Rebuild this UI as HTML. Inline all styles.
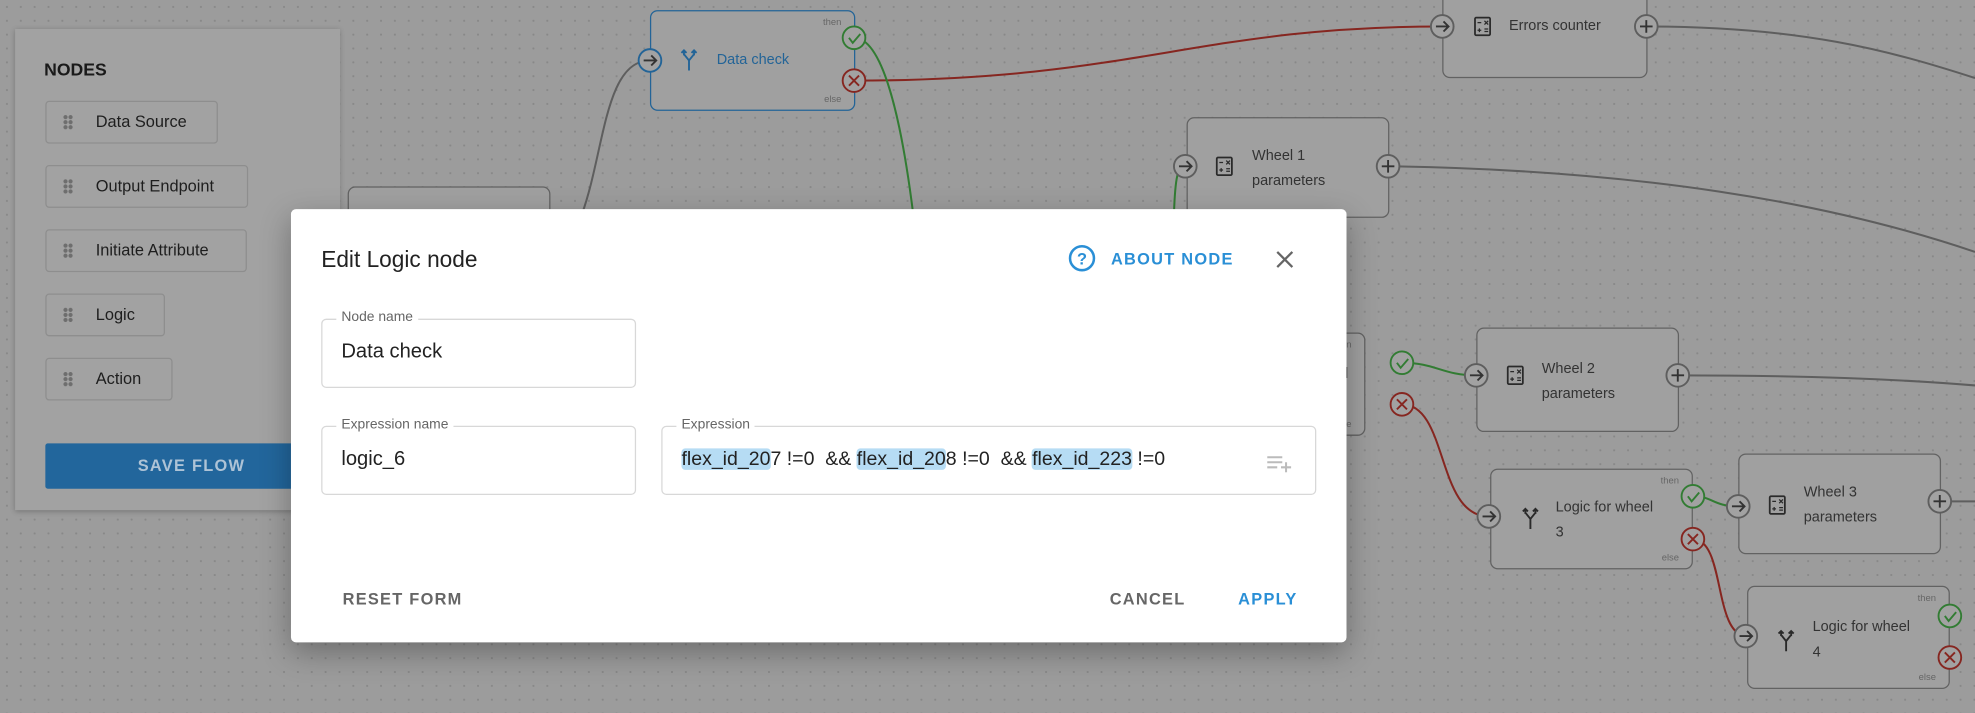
<!DOCTYPE html>
<html><head><meta charset="utf-8"><style>
*{box-sizing:border-box;margin:0;padding:0}
html,body{width:1975px;height:712px;overflow:hidden;background:#9c9c9c}
#w{position:absolute;left:0;top:0;width:1568px;height:566px;transform:scale(1.2596);transform-origin:0 0;font-family:"Liberation Sans",sans-serif;
background-color:#9c9c9c;background-image:radial-gradient(circle,#888 0.7px,transparent 1px);background-size:11px 11px}
.abs{position:absolute}
.side{left:12px;top:23px;width:258px;height:382px;background:#a2a2a2;box-shadow:0 1px 4px rgba(0,0,0,.25)}
.side h3{position:absolute;left:23px;top:24px;font-size:14px;font-weight:bold;color:#1a1a1a}
.item{position:absolute;left:24px;height:34px;border:1px solid #8e8e8e;border-radius:3px;font-size:13px;color:#1e1e1e;padding-left:39px;line-height:32px}
.item:before{content:"";position:absolute;left:13px;top:10px;width:8px;height:12px;background:radial-gradient(circle,#6e6e6e 1.5px,transparent 1.8px);background-size:4px 4px}
.btn{position:absolute;left:24px;top:329px;width:232px;height:36px;background:#22669c;color:#aec3d6;font-size:13px;font-weight:bold;letter-spacing:1px;text-align:center;line-height:36px;border-radius:2px}
.node{position:absolute;background:#a0a0a0;border:1.5px solid #626262;border-radius:6px;font-size:12px;color:#444}
.lbl{position:absolute;font-size:11.5px;line-height:24px;color:#333}
.tiny{position:absolute;font-size:7.5px;color:#666}
.dlg{left:231px;top:166px;width:838px;height:344px;background:#fff;border-radius:4px;box-shadow:0 8px 24px rgba(0,0,0,.3)}
.fld{position:absolute;border:1px solid #d8d8d8;border-radius:4px;height:55px;font-size:16px;color:#222;padding:17px 15px}
.fld span.l{position:absolute;left:11px;top:-8px;background:#fff;padding:0 4px;font-size:11px;color:#666}
.hl{background:#b6dcf4;border-radius:3px}
.tb{position:absolute;font-size:13px;font-weight:bold;letter-spacing:1px}
</style></head><body><div id="w">
<svg class="abs" style="left:0;top:0" width="1568" height="566" fill="none" stroke-width="1.6">
<path d="M678 64 C900 64 950 21 1145 21" stroke="#862620"/>
<path d="M678 30 C700 30 715 90 725 170" stroke="#327c33"/>
<path d="M516 48 C480 48 480 120 462 170" stroke="#5e5e5e"/>
<path d="M1307 21 C1430 21 1500 40 1568 62" stroke="#5e5e5e"/>
<path d="M1102 132 C1300 135 1450 160 1568 200" stroke="#5e5e5e"/>
<path d="M1332 298 C1450 298 1520 302 1568 306" stroke="#5e5e5e"/>
<path d="M932 170 C933 140 935 132 941 132" stroke="#327c33"/>
<path d="M1113 288 C1140 288 1145 298 1172 298" stroke="#327c33"/>
<path d="M1113 321 C1150 321 1140 410 1182 410" stroke="#862620"/>
<path d="M1344 394 C1360 394 1360 402 1380 402" stroke="#327c33"/>
<path d="M1344 428 C1370 428 1360 505 1387 505" stroke="#862620"/>
<path d="M1540 398 L1568 398" stroke="#5e5e5e"/>
</svg>
<div class="side abs"><h3>NODES</h3>
<div class="item" style="top:57px;width:137px">Data Source</div>
<div class="item" style="top:108px;width:161px">Output Endpoint</div>
<div class="item" style="top:159px;width:160px">Initiate Attribute</div>
<div class="item" style="top:210px;width:95px">Logic</div>
<div class="item" style="top:261px;width:101px">Action</div>
<div class="btn">SAVE FLOW</div></div>

<div class="node" style="left:516px;top:8px;width:163px;height:80px;border-color:#236497"><div class="lbl" style="left:52px;top:27px;color:#236497">Data check</div><div class="tiny" style="right:10px;top:4px">then</div><div class="tiny" style="right:10px;bottom:4px">else</div></div>
<div class="node" style="left:276px;top:148px;width:161px;height:40px"></div>
<div class="node" style="left:1145px;top:-6px;width:163px;height:68px"><div class="lbl" style="left:52px;top:14px">Errors counter</div></div>
<div class="node" style="left:942px;top:93px;width:161px;height:80px"><div class="lbl" style="left:51px;top:20px;line-height:20px">Wheel 1<br>parameters</div></div>
<div class="node" style="left:1000px;top:264px;width:84px;height:82px"><div class="lbl" style="left:54px;top:20px">eel</div><div class="tiny" style="right:10px;top:4px">then</div><div class="tiny" style="right:10px;bottom:4px">else</div></div>
<div class="node" style="left:1172px;top:260px;width:161px;height:83px"><div class="lbl" style="left:51px;top:22px;line-height:20px">Wheel 2<br>parameters</div></div>
<div class="node" style="left:1183px;top:372px;width:161px;height:80px"><div class="lbl" style="left:51px;top:20px;line-height:20px">Logic for wheel<br>3</div><div class="tiny" style="right:10px;top:4px">then</div><div class="tiny" style="right:10px;bottom:4px">else</div></div>
<div class="node" style="left:1380px;top:360px;width:161px;height:80px"><div class="lbl" style="left:51px;top:20px;line-height:20px">Wheel 3<br>parameters</div></div>
<div class="node" style="left:1387px;top:465px;width:161px;height:82px"><div class="lbl" style="left:51px;top:22px;line-height:20px">Logic for wheel<br>4</div><div class="tiny" style="right:10px;top:4px">then</div><div class="tiny" style="right:10px;bottom:4px">else</div></div>

<svg class="abs" style="left:0;top:0" width="1568" height="566" stroke-width="1.5" fill="none">
<defs>
<g id="calc"><rect x="-6" y="-7" width="12" height="14" rx="1" stroke="#2a2a2a" stroke-width="1.4"/><path d="M-4 -3h3M1.5 -4.5l3 3M4.5 -4.5l-3 3M-4 3h3M-2.5 1.5v3M1.5 2h3M1.5 4h3" stroke="#2a2a2a" stroke-width="1"/></g>
<g id="fork"><path d="M0 9V1M0 1L-4 -4M0 1L4 -4M-4 -7v4M-6 -5l2 -2 2 2M4 -7v4M2 -5l2 -2 2 2" stroke-width="1.5"/></g>
</defs>
<use href="#calc" x="1177" y="21"/><use href="#calc" x="972" y="132"/><use href="#calc" x="1203" y="298"/><use href="#calc" x="1411" y="401"/>
<use href="#fork" x="547" y="47" stroke="#236497"/><use href="#fork" x="1215" y="411" stroke="#2a2a2a"/><use href="#fork" x="1418" y="508" stroke="#2a2a2a"/>
<g fill="#a2a2a2" stroke="#5e5e5e">
<circle cx="516" cy="48" r="9" stroke="#236497"/><circle cx="1145" cy="21" r="9"/><circle cx="1307" cy="21" r="9"/><circle cx="941" cy="132" r="9"/><circle cx="1102" cy="132" r="9"/><circle cx="1172" cy="298" r="9"/><circle cx="1332" cy="298" r="9"/><circle cx="1182" cy="410" r="9"/><circle cx="1380" cy="402" r="9"/><circle cx="1540" cy="398" r="9"/><circle cx="1386" cy="505" r="9"/>
<circle cx="678" cy="30" r="9" stroke="#327c33"/><circle cx="1113" cy="288" r="9" stroke="#327c33"/><circle cx="1344" cy="394" r="9" stroke="#327c33"/><circle cx="1548" cy="489" r="9" stroke="#327c33"/>
<circle cx="678" cy="64" r="9" stroke="#862620"/><circle cx="1113" cy="321" r="9" stroke="#862620"/><circle cx="1344" cy="428" r="9" stroke="#862620"/><circle cx="1548" cy="522" r="9" stroke="#862620"/>
</g>
<g stroke="#333"><path d="M511 48h10M517 44l4 4-4 4"/><path d="M1140 21h10M1146 17l4 4-4 4"/><path d="M936 132h10M942 128l4 4-4 4"/><path d="M1167 298h10M1173 294l4 4-4 4"/><path d="M1177 410h10M1183 406l4 4-4 4"/><path d="M1375 402h10M1381 398l4 4-4 4"/><path d="M1381 505h10M1387 501l4 4-4 4"/>
<path d="M1302 21h10M1307 16v10M1097 132h10M1102 127v10M1327 298h10M1332 293v10M1535 398h10M1540 393v10"/></g>
<g stroke="#327c33"><path d="M674 30l3 4 6-7M1109 288l3 4 6-7M1340 394l3 4 6-7M1544 489l3 4 6-7"/></g>
<g stroke="#862620"><path d="M674 60l8 8M682 60l-8 8M1109 317l8 8M1117 317l-8 8M1340 424l8 8M1348 424l-8 8M1544 518l8 8M1552 518l-8 8"/></g>
</svg>

<div class="dlg abs">
<div class="abs" style="left:24px;top:30px;font-size:18px;font-weight:500;color:#222">Edit Logic node</div>
<svg class="abs" style="left:617px;top:28px" width="22" height="22"><circle cx="11" cy="11" r="9.5" fill="none" stroke="#2a8fd6" stroke-width="2"/><text x="11" y="16" font-size="13" font-weight="bold" text-anchor="middle" fill="#2a8fd6" font-family="Liberation Sans">?</text></svg>
<div class="tb" style="left:651px;top:32px;color:#2a8fd6">ABOUT NODE</div>
<svg class="abs" style="left:782px;top:33px" width="14" height="14"><path d="M1 1l12 12M13 1L1 13" stroke="#666" stroke-width="1.8"/></svg>
<div class="fld" style="left:24px;top:87px;width:250px"><span class="l">Node name</span>Data check</div>
<div class="fld" style="left:24px;top:172px;width:250px"><span class="l">Expression name</span>logic_6</div>
<div class="fld" style="left:294px;top:172px;width:520px;padding-left:15px;white-space:pre;font-size:15.5px"><span class="l">Expression</span><span class="hl">flex_id_20</span>7 !=0  &amp;&amp; <span class="hl">flex_id_20</span>8 !=0  &amp;&amp; <span class="hl">flex_id_223</span> !=0<svg class="abs" style="right:16px;top:22px" width="22" height="14"><path d="M0 2h12M0 6h12M0 10h8M15 6v8M11 10h8" stroke="#bbb" stroke-width="1.6"/></svg></div>
<div class="tb" style="left:41px;top:302px;color:#666">RESET FORM</div>
<div class="tb" style="left:650px;top:302px;color:#666">CANCEL</div>
<div class="tb" style="left:752px;top:302px;color:#2a8fd6">APPLY</div>
</div>
</div></body></html>
